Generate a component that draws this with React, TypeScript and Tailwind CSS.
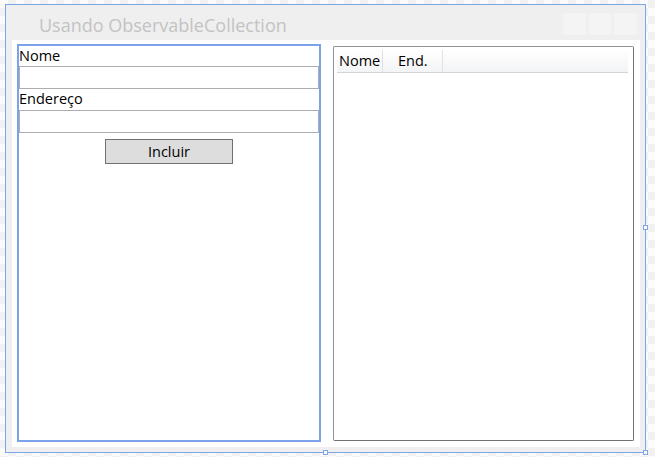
import React from "react";

const font = { fontFamily: '"Open Sans", "Segoe UI", sans-serif' };

const Field = ({ label, h }: { label: string; h: string }) => (
  <>
    <div className={`${h} leading-[20px] text-[14.5px] text-black`}>{label}</div>
    <div className="h-[23px] border border-[#abadb3] bg-white" />
  </>
);

const App = () => {
  return (
    <div
      className="w-[655px] h-[457px] pt-[4px] pl-[5px] bg-[repeating-conic-gradient(#f1f1f1_0%_25%,#fbfbfb_0%_50%)] bg-[length:16px_16px] relative"
      style={font}
    >
      <div className="w-[641px] h-[449px] border border-[#7ea4ea] bg-[#efefef] flex flex-col">
        {/* title bar */}
        <div className="h-[35px] flex items-start">
          <div className="pl-[33px] pt-[8px] text-[18px] leading-[24px] text-[#c3c3c3] flex-1">
            Usando ObservableCollection
          </div>
          <div className="flex gap-[3px] pt-[8px] pr-[8px]">
            <div className="w-[23px] h-[22px] bg-[#f4f4f4]" />
            <div className="w-[22px] h-[22px] bg-[#f4f4f4]" />
            <div className="w-[23px] h-[22px] bg-[#f4f4f4]" />
          </div>
        </div>

        {/* client area */}
        <div className="ml-[6px] w-[628px] h-[407px] bg-white flex items-start">
          <div className="ml-[5px] mt-[4px] w-[304px] h-[398px] border-2 border-[#7ba2ea] flex flex-col">
            <Field label="Nome" h="h-[20px]" />
            <Field label="Endereço" h="h-[21px]" />
            <div className="flex justify-center mt-[6px]">
              <button className="w-[128px] h-[25px] bg-[#dddddd] border border-[#707070] text-[14.5px] leading-[20px] text-black">
                Incluir
              </button>
            </div>
          </div>

          <div className="ml-[12px] mt-[6px] w-[301px] h-[395px] border border-[#8f9297] border-r-[#6e7176] border-b-[#6e7176] rounded-[2px] p-[3px]">
            <div className="h-[23px] flex border-b border-[#d5d5d5] mr-[2px] bg-[linear-gradient(#ffffff,#f3f4f5)] text-[14.5px] text-black">
              <div className="w-[46px] border-r border-[#e0e2e5] leading-[22px] pl-[2px]">Nome</div>
              <div className="w-[60px] border-r border-[#e0e2e5] leading-[22px] pl-[15px]">End.</div>
            </div>
          </div>
        </div>
      </div>

      {/* selection handles */}
      <div className="absolute left-[643px] top-[225px] w-[5px] h-[5px] border border-[#7ea4ea] bg-white" />
      <div className="absolute left-[323px] top-[450px] w-[5px] h-[5px] border border-[#7ea4ea] bg-white" />
      <div className="absolute left-[643px] top-[450px] w-[5px] h-[5px] border border-[#7ea4ea] bg-white" />
    </div>
  );
};

export default App;
